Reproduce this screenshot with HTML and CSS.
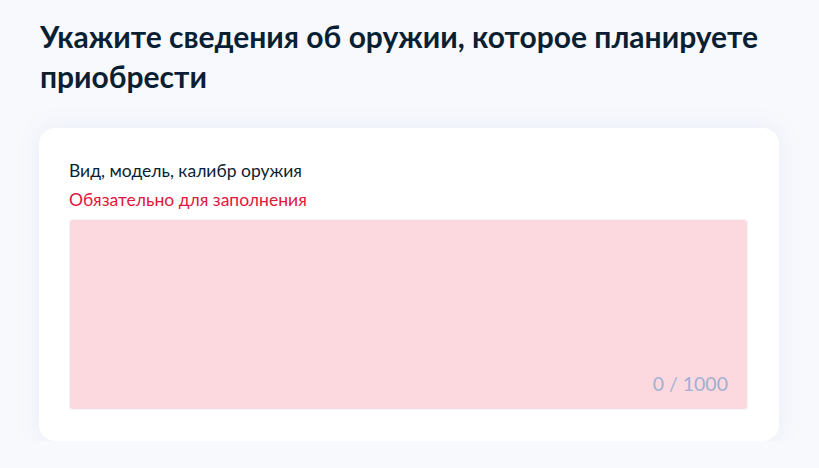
FILE: index.html
```html
<!DOCTYPE html>
<html lang="ru">
<head>
  <meta charset="UTF-8">
  <meta name="viewport" content="width=device-width, initial-scale=1.0">
  <title>Сведения об оружии</title>
  <link rel="stylesheet" href="styles.css">
</head>
<body>
  <h1>Укажите сведения об оружии, которое планируете приобрести</h1>

  <div class="card">
    <label class="label" for="weapon">Вид, модель, калибр оружия</label>
    <div class="error">Обязательно для заполнения</div>
    <div class="field">
      <textarea id="weapon" maxlength="1000"></textarea>
      <div class="counter">0 / 1000</div>
    </div>
  </div>
</body>
</html>
```

FILE: styles.css
```css
body {
  font-family: Lato, "Noto Sans", sans-serif;
  margin: 0;
  padding: 16px 40px 0 39px;
  background-color: #f8f9fd;
  color: #0b1f33;
}
h1 {
  font-size: 30px;
  line-height: 40px;
  font-weight: 700;
  margin: 0 0 32px 1px;
  max-width: 740px;
}
.card {
  background-color: white;
  border-radius: 16px;
  box-shadow: 0 0 24px rgba(102, 128, 200, 0.1);
  padding: 30px 31px 31px 30px;
}
.label {
  display: block;
  font-size: 17.5px;
  line-height: 26px;
}
.error {
  font-size: 17.5px;
  line-height: 26px;
  margin-top: 3px;
  color: #e3163b;
}
.field {
  position: relative;
  margin-top: 6px;
}
textarea {
  display: block;
  box-sizing: border-box;
  width: 100%;
  height: 191px;
  margin: 0;
  border: 1px solid #f2f4f8;
  border-radius: 4px;
  background-color: #fcd9de;
  resize: none;
  font-family: inherit;
  font-size: 17.5px;
}
.counter {
  position: absolute;
  right: 20px;
  bottom: 13px;
  font-size: 19.5px;
  line-height: 26px;
  color: #9eb1d3;
}
```
